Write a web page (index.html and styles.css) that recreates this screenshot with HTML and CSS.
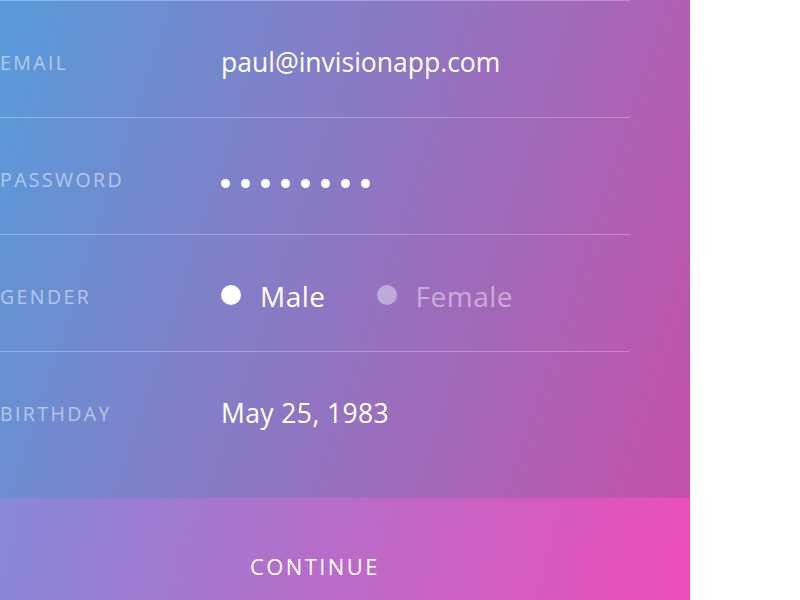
FILE: index.html
```html
<!DOCTYPE html>
<html lang="en">
<head>
<meta charset="utf-8">
<title>Profile form</title>
<link rel="stylesheet" href="styles.css">
</head>
<body>
<div class="panel">
  <div class="form">
    <div class="row">
      <div class="label">Email</div>
      <div class="value">paul@invisionapp.com</div>
    </div>
    <div class="row">
      <div class="label">Password</div>
      <div class="value dots" aria-label="password">
        <span class="dot"></span><span class="dot"></span><span class="dot"></span><span class="dot"></span><span class="dot"></span><span class="dot"></span><span class="dot"></span><span class="dot"></span>
      </div>
    </div>
    <div class="row">
      <div class="label">Gender</div>
      <div class="value radios">
        <span class="radio selected"><span class="knob"></span>Male</span>
        <span class="radio"><span class="knob"></span>Female</span>
      </div>
    </div>
    <div class="row last">
      <div class="label">Birthday</div>
      <div class="value date">May 25, 1983</div>
    </div>
  </div>
  <div class="button"><span class="button-text">Continue</span></div>
</div>
</body>
</html>
```
FILE: styles.css
```css
html, body {
  margin: 0;
  padding: 0;
  background: #ffffff;
  overflow: hidden;
  height: 600px;
}
body {
  font-family: "Open Sans", "Lato", sans-serif;
}
.panel {
  width: 690px;
  background: linear-gradient(108deg, #589bdb 0%, #c94ea7 100%);
}
.form {
  width: 630px;
  padding-bottom: 30px;
}
.row {
  display: grid;
  grid-template-columns: 221px 1fr;
  align-items: center;
  height: 117px;
  box-sizing: border-box;
  border-top: 1px solid rgba(255, 255, 255, 0.28);
  padding-top: 6px;
}
.label {
  color: rgba(255, 255, 255, 0.52);
  font-size: 19.5px;
  letter-spacing: 2.4px;
  text-transform: uppercase;
  padding-top: 1px;
}
.value {
  color: #ffffff;
  font-size: 26.5px;
  letter-spacing: 0;
}
.value.date {
  letter-spacing: 0.4px;
}
.dots {
  display: flex;
  gap: 11px;
  align-items: center;
  padding-top: 8px;
}
.dot {
  width: 9px;
  height: 9px;
  border-radius: 50%;
  background: #ffffff;
}
.radios {
  display: flex;
  align-items: center;
  gap: 51px;
  font-size: 28px;
  letter-spacing: 0.5px;
}
.radio {
  display: flex;
  align-items: center;
  gap: 19px;
  color: rgba(255, 255, 255, 0.45);
}
.radio.selected {
  color: #ffffff;
}
.knob {
  width: 20px;
  height: 20px;
  border-radius: 50%;
  background: rgba(255, 255, 255, 0.4);
  margin-top: -3px;
}
.radio.selected .knob {
  background: #ffffff;
}
.button {
  height: 102px;
  box-sizing: border-box;
  padding: 34px 60px 0 0;
  display: flex;
  align-items: center;
  justify-content: center;
  background: linear-gradient(105deg, #8689d9 0%, #ee4db8 100%);
}
.button-text {
  color: #ffffff;
  font-size: 22px;
  letter-spacing: 2.4px;
  text-transform: uppercase;
}
```
